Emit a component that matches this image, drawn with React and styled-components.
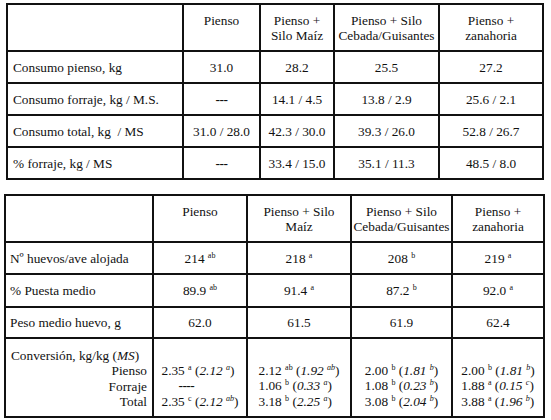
import { Fragment } from "react";
import styled, { createGlobalStyle } from "styled-components";

const GlobalStyle = createGlobalStyle`
  html, body {
    margin: 0;
    padding: 0;
    background: #ffffff;
  }
  body {
    font-family: "Liberation Serif", "Times New Roman", serif;
    color: #111;
  }
`;

const Page = styled.div`
  width: 551px;
  height: 420px;
  padding-top: 3px;
  box-sizing: border-box;
  display: flex;
  flex-direction: column;
  gap: 14px;
`;

const Grid = styled.div`
  display: grid;
  grid-template-columns: ${(p) => p.cols.map((c) => `${c}px`).join(" ")};
  grid-template-rows: ${(p) => p.rows.map((r) => `${r}px`).join(" ")};
  margin-left: ${(p) => p.left}px;
  width: max-content;
  border-left: 2px solid #111;
  border-top: 2px solid #111;
  font-family: "Liberation Serif", "Times New Roman", serif;
  font-size: 13.3px;
  line-height: 15px;
  color: #111;
`;

const Cell = styled.div`
  box-sizing: border-box;
  border-right: 2px solid #111;
  border-bottom: 2px solid #111;
  display: flex;
  align-items: center;
  justify-content: center;
  text-align: center;
  white-space: nowrap;
`;

const HeadCell = styled(Cell)`
  align-items: flex-start;
  padding-top: 8px;
`;

const LabelCell = styled(Cell)`
  justify-content: flex-start;
  padding-left: ${(p) => p.pad}px;
`;

const Dash = styled.span`
  font-weight: bold;
  letter-spacing: -0.5px;
`;

const Sup = styled.sup`
  font-size: 8px;
  line-height: 0;
  vertical-align: 5px;
`;

const Ital = styled.i`
  font-style: italic;
`;

const ConvLabel = styled(Cell)`
  flex-direction: column;
  align-items: stretch;
  justify-content: flex-start;
  padding: 9px 5px 0 5px;
  line-height: 15.4px;
`;

const ConvTitle = styled.div`
  text-align: left;
`;

const ConvSub = styled.div`
  text-align: right;
`;

const ConvCell = styled(Cell)`
  align-items: flex-start;
  padding-top: 24px;
  line-height: 15.4px;
`;

const ConvLines = styled.div`
  display: inline-block;
  text-align: left;
`;

const ConvDash = styled.div`
  padding-left: 17px;
  font-weight: bold;
  letter-spacing: -0.5px;
`;

const t1Head = [
  ["Pienso"],
  ["Pienso +", "Silo Maíz"],
  ["Pienso + Silo", "Cebada/Guisantes"],
  ["Pienso +", "zanahoria"],
];

const t1Rows = [
  ["Consumo pienso, kg", "31.0", "28.2", "25.5", "27.2"],
  ["Consumo forraje, kg / M.S.", "---", "14.1 / 4.5", "13.8 / 2.9", "25.6 / 2.1"],
  ["Consumo total, kg\u00a0 / MS", "31.0 / 28.0", "42.3 / 30.0", "39.3 / 26.0", "52.8 / 26.7"],
  ["% forraje, kg / MS", "---", "33.4 / 15.0", "35.1 / 11.3", "48.5 / 8.0"],
];

const t2Head = [
  ["Pienso"],
  ["Pienso + Silo", "Maíz"],
  ["Pienso + Silo", "Cebada/Guisantes"],
  ["Pienso +", "zanahoria"],
];

const t2Rows = [
  ["Nº huevos/ave alojada", ["214", "ab"], ["218", "a"], ["208", "b"], ["219", "a"]],
  ["% Puesta medio", ["89.9", "ab"], ["91.4", "a"], ["87.2", "b"], ["92.0", "a"]],
  ["Peso medio huevo, g", ["62.0"], ["61.5"], ["61.9"], ["62.4"]],
];

const conversion = [
  [["2.35", "a", "2.12", "a"], null, ["2.35", "c", "2.12", "ab"]],
  [["2.12", "ab", "1.92", "ab"], ["1.06", "b", "0.33", "a"], ["3.18", "b", "2.25", "a"]],
  [["2.00", "b", "1.81", "b"], ["1.08", "b", "0.23", "b"], ["3.08", "b", "2.04", "b"]],
  [["2.00", "b", "1.81", "b"], ["1.88", "a", "0.15", "c"], ["3.88", "a", "1.96", "b"]],
];

const Head = ({ lines }) => (
  <HeadCell>
    <div>
      {lines.map((l, i) => (
        <div key={i}>{l}</div>
      ))}
    </div>
  </HeadCell>
);

const Value = ({ v }) => (v === "---" ? <Dash>---</Dash> : v);

const Marked = ({ v }) => (
  <span>
    {v[0]}
    {v[1] && (
      <>
        {" "}
        <Sup>{v[1]}</Sup>
      </>
    )}
  </span>
);

const ConvLine = ({ v }) => (
  <div>
    {v[0]} <Sup>{v[1]}</Sup> (
    <Ital>
      {v[2]} <Sup>{v[3]}</Sup>
    </Ital>
    )
  </div>
);

export default function App() {
  return (
    <>
      <GlobalStyle />
      <Page>
        <Grid left={6} cols={[176, 77, 74, 105, 104]} rows={[47, 32, 32, 32, 32]}>
          <HeadCell />
          {t1Head.map((h, i) => (
            <Head key={i} lines={h} />
          ))}
          {t1Rows.map((row) => (
            <Fragment key={row[0]}>
              <LabelCell pad={5}>{row[0]}</LabelCell>
              {row.slice(1).map((v, i) => (
                <Cell key={i}>
                  <Value v={v} />
                </Cell>
              ))}
            </Fragment>
          ))}
        </Grid>

        <Grid left={4} cols={[148, 94, 104, 101, 92]} rows={[47, 32, 33, 31, 79]}>
          <HeadCell />
          {t2Head.map((h, i) => (
            <Head key={i} lines={h} />
          ))}
          {t2Rows.map((row) => (
            <Fragment key={row[0]}>
              <LabelCell pad={4}>{row[0]}</LabelCell>
              {row.slice(1).map((v, i) => (
                <Cell key={i}>
                  <Marked v={v} />
                </Cell>
              ))}
            </Fragment>
          ))}
          <ConvLabel>
            <ConvTitle>
              Conversión, kg/kg (<Ital>MS</Ital>)
            </ConvTitle>
            <ConvSub>Pienso</ConvSub>
            <ConvSub>Forraje</ConvSub>
            <ConvSub>Total</ConvSub>
          </ConvLabel>
          {conversion.map((col, i) => (
            <ConvCell key={i}>
              <ConvLines>
                {col.map((v, j) =>
                  v ? <ConvLine key={j} v={v} /> : <ConvDash key={j}>----</ConvDash>
                )}
              </ConvLines>
            </ConvCell>
          ))}
        </Grid>
      </Page>
    </>
  );
}
